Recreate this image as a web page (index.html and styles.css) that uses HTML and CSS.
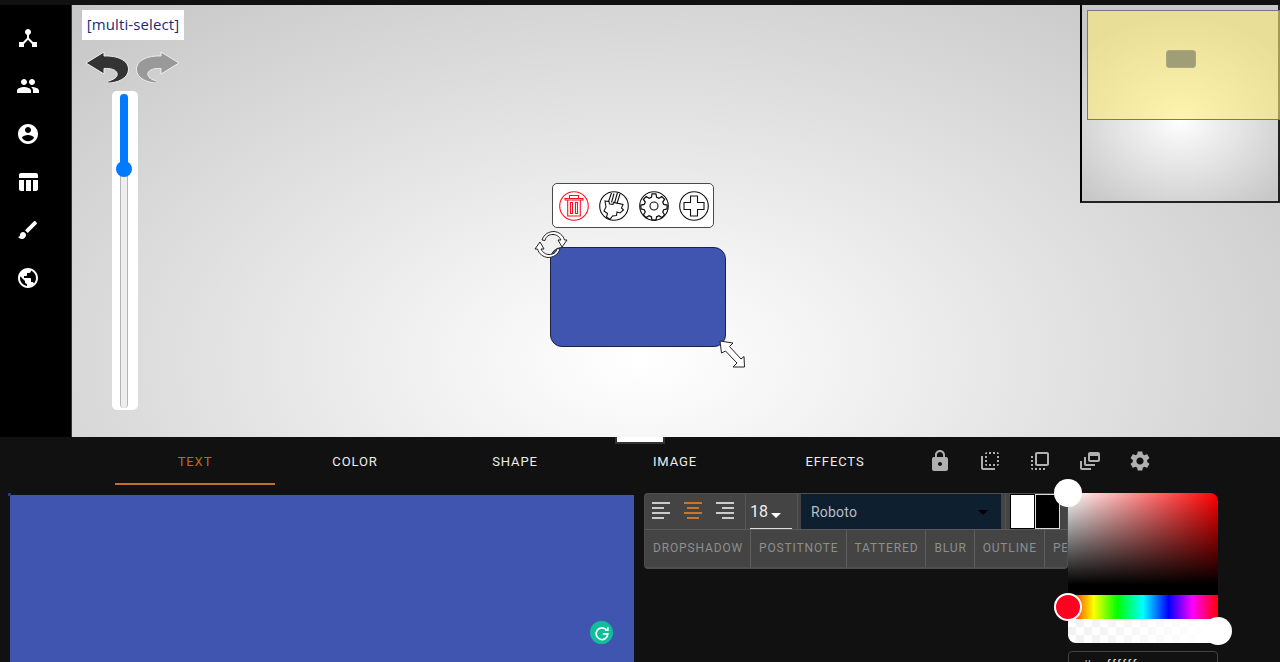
FILE: index.html
```html
<!DOCTYPE html>
<html lang="en">
<head>
<meta charset="utf-8">
<title>Editor</title>
<link rel="stylesheet" href="styles.css">
</head>
<body>
<div class="top-strip"></div>
<main class="workspace">
  <nav class="sidebar">
    <svg class="nav-icon" viewBox="0 0 24 24"><path d="M17 16l-4-4V8.820C14.150 8.400 15 7.310 15 6c0-1.660-1.340-3-3-3S9 4.340 9 6c0 1.310.85 2.400 2 2.820V12l-4 4H3v5h5v-3.050l4-4.200 4 4.200V21h5v-5h-4z"/></svg>
    <svg class="nav-icon" viewBox="0 0 24 24"><path d="M16 11c1.660 0 2.990-1.340 2.990-3S17.660 5 16 5c-1.660 0-3 1.340-3 3s1.340 3 3 3zm-8 0c1.660 0 2.990-1.340 2.990-3S9.660 5 8 5C6.340 5 5 6.340 5 8s1.340 3 3 3zm0 2c-2.330 0-7 1.170-7 3.500V19h14v-2.500c0-2.330-4.670-3.500-7-3.500zm8 0c-.29 0-.62.020-.97.050 1.160.84 1.970 1.970 1.970 3.450V19h6v-2.500c0-2.330-4.670-3.500-7-3.500z"/></svg>
    <svg class="nav-icon" viewBox="0 0 24 24"><path d="M12 2C6.480 2 2 6.480 2 12s4.480 10 10 10 10-4.480 10-10S17.520 2 12 2zm0 3c1.660 0 3 1.340 3 3s-1.340 3-3 3-3-1.340-3-3 1.340-3 3-3zm0 14.200c-2.500 0-4.710-1.280-6-3.220.03-1.990 4-3.080 6-3.080 1.990 0 5.970 1.090 6 3.080-1.290 1.940-3.500 3.220-6 3.220z"/></svg>
    <svg class="nav-icon" viewBox="0 0 24 24"><path d="M10 10.020h5V21h-5zM17 21h3c1.100 0 2-.9 2-2v-9h-5v11zm3-18H5c-1.100 0-2 .9-2 2v3h19V5c0-1.100-.9-2-2-2zM3 19c0 1.100.9 2 2 2h3V10H3v9z"/></svg>
    <svg class="nav-icon" viewBox="0 0 24 24"><path d="M7 14c-1.660 0-3 1.340-3 3 0 1.310-1.160 2-2 2 .92 1.220 2.490 2 4 2 2.210 0 4-1.790 4-4 0-1.660-1.340-3-3-3zm13.710-9.370l-1.340-1.340c-.39-.39-1.020-.39-1.410 0L9 12.250 11.750 15l8.960-8.960c.39-.39.39-1.020 0-1.410z"/></svg>
    <svg class="nav-icon" viewBox="0 0 24 24"><path d="M12 2C6.480 2 2 6.480 2 12s4.480 10 10 10 10-4.480 10-10S17.520 2 12 2zm-1 17.930c-3.950-.49-7-3.850-7-7.930 0-.62.080-1.210.21-1.790L9 15v1c0 1.100.9 2 2 2v1.930zm6.900-2.540c-.26-.81-1-1.390-1.900-1.390h-1v-3c0-.55-.45-1-1-1H8v-2h2c.55 0 1-.45 1-1V7h2c1.100 0 2-.9 2-2v-.41c2.930 1.190 5 4.060 5 7.410 0 2.080-.8 3.970-2.100 5.390z"/></svg>
  </nav>
  <section class="canvas">
    <div class="mode-label">[multi-select]</div>
    <div class="history">
      <svg class="history-icon" viewBox="0 0 46 32"><path class="undo" d="M1 12 19 1V5C32 4.500 44 9 43.500 19 43 27 33 32 23 32 22 31 23 30 25 29.500 30 28 33 25.500 32 22 31 18.500 25 17 19 17.500V23Z"/></svg>
      <svg class="history-icon" viewBox="0 0 46 32"><path class="redo" transform="matrix(-1 0 0 1 46 0)" d="M1 12 19 1V5C32 4.500 44 9 43.500 19 43 27 33 32 23 32 22 31 23 30 25 29.500 30 28 33 25.500 32 22 31 18.500 25 17 19 17.500V23Z"/></svg>
    </div>
    <div class="zoom-slider">
      <div class="zoom-track"><div class="zoom-fill"></div><div class="zoom-thumb"></div></div>
    </div>
    <div class="node-toolbar">
      <svg class="tool tool-delete" viewBox="0 0 30 30"><circle cx="15" cy="15" r="14.300"/><path d="M6 7.500h18v1.500H6zM10.500 7.500V4.500h9v3M8.700 9V25h12.600V9M11.500 11.500V22.500h2V11.500zM16.500 11.500V22.500h2V11.500z"/></svg>
      <svg class="tool" viewBox="0 0 30 30"><circle cx="15" cy="15" r="14.300"/><path d="M12.500 2 9.500 10.500M15 2.500 12.500 11.500M18.500 1.500 15.500 12M21 3 18 12.500"/><path d="M6 10 10 10.500 10.500 13 14 13.500 14.500 11.500 24 13.500 22.500 17 24.500 19 21 22 18 21 17.500 24.500 13.500 25 11 28.500 7.500 26 8.500 22.500 5 20 7 16Z"/></svg>
      <svg class="tool" viewBox="0 0 30 30"><circle cx="15" cy="15" r="14.300"/><path transform="translate(15 15) scale(1.150) translate(-15 -15)" d="M13.300 4.500h3.400l.6 2.900 2 .9 2.500-1.600 2.400 2.400-1.600 2.500.9 2 2.900.6v3.400l-2.900.6-.9 2 1.600 2.500-2.400 2.400-2.500-1.600-2 .9-.6 2.900h-3.400l-.6-2.900-2-.9-2.500 1.600-2.400-2.400 1.600-2.500-.9-2-2.900-.6v-3.400l2.900-.6.9-2-1.600-2.500 2.400-2.400 2.500 1.600 2-.9z"/><circle cx="15" cy="15" r="4"/></svg>
      <svg class="tool" viewBox="0 0 30 30"><circle cx="15" cy="15" r="14.300"/><path d="M11.500 5h7v6.500H25v7h-6.500V25h-7v-6.500H5v-7h6.500z"/></svg>
    </div>
    <div class="node"></div>
    <svg class="handle-rotate" viewBox="0 0 32 27"><path d="M7 9C9 3 14 .5 19 .5 24 1 28 4 29.500 9L32 9 27 16 23 9 26 9C24 5 21 3.500 18 3.500 14 3.500 11 5 10 9.500Z"/><path transform="rotate(180 16 13.500)" d="M7 9C9 3 14 .5 19 .5 24 1 28 4 29.500 9L32 9 27 16 23 9 26 9C24 5 21 3.500 18 3.500 14 3.500 11 5 10 9.500Z"/></svg>
    <svg class="handle-resize" viewBox="0 0 26 28"><path d="M1 1 14 3 10.500 6.500 22 19 25 16.500 25.500 27 14 27 18 23 6.500 11 2.500 13Z"/></svg>
    <aside class="minimap">
      <div class="minimap-view"><div class="minimap-node"></div></div>
    </aside>
  </section>
</main>
<section class="panel">
  <div class="drawer-handle"></div>
  <header class="tab-row">
    <div class="tabs">
      <button class="tab tab-active">TEXT</button>
      <button class="tab">COLOR</button>
      <button class="tab">SHAPE</button>
      <button class="tab">IMAGE</button>
      <button class="tab">EFFECTS</button>
    </div>
    <div class="tab-icons">
      <svg class="tab-icon" viewBox="0 0 24 24"><path d="M18 8h-1V6c0-2.760-2.240-5-5-5S7 3.240 7 6v2H6c-1.100 0-2 .9-2 2v10c0 1.100.9 2 2 2h12c1.100 0 2-.9 2-2V10c0-1.100-.9-2-2-2zm-6 9c-1.100 0-2-.9-2-2s.9-2 2-2 2 .9 2 2-.9 2-2 2zm3.100-9H8.900V6c0-1.710 1.390-3.100 3.100-3.100 1.710 0 3.100 1.390 3.100 3.100v2z"/></svg>
      <svg class="tab-icon" viewBox="0 0 24 24"><path d="M9 7H7v2h2V7zm0 4H7v2h2v-2zm0-8c-1.110 0-2 .9-2 2h2V3zm4 12h-2v2h2v-2zm6-12v2h2c0-1.100-.9-2-2-2zm-6 0h-2v2h2V3zM9 17v-2H7c0 1.100.89 2 2 2zm10-4h2v-2h-2v2zm0-4h2V7h-2v2zm0 8c1.100 0 2-.9 2-2h-2v2zM5 7H3v12c0 1.100.89 2 2 2h12v-2H5V7zm10-2h2V3h-2v2zm0 12h2v-2h-2v2z"/></svg>
      <svg class="tab-icon" viewBox="0 0 24 24"><path d="M3 13h2v-2H3v2zm0 4h2v-2H3v2zm2 4v-2H3c0 1.100.89 2 2 2zM3 9h2V7H3v2zm12 12h2v-2h-2v2zm4-18H9c-1.110 0-2 .9-2 2v10c0 1.100.89 2 2 2h10c1.100 0 2-.9 2-2V5c0-1.100-.9-2-2-2zm0 12H9V5h10v10zm-8 6h2v-2h-2v2zm-4 0h2v-2H7v2z"/></svg>
      <svg class="tab-icon" viewBox="0 0 24 24"><path d="M8 8H6v7c0 1.100.9 2 2 2h9v-2H8V8zM20 3h-8c-1.100 0-2 .9-2 2v6c0 1.100.9 2 2 2h8c1.100 0 2-.9 2-2V5c0-1.100-.9-2-2-2zm0 8h-8V7h8v4zM4 12H2v7c0 1.100.9 2 2 2h9v-2H4v-7z"/></svg>
      <svg class="tab-icon" viewBox="0 0 24 24"><path d="M19.140 12.940c.04-.3.060-.61.060-.94 0-.32-.02-.64-.07-.94l2.030-1.580c.18-.14.23-.41.120-.61l-1.920-3.320c-.12-.22-.37-.29-.59-.22l-2.390.96c-.5-.38-1.030-.7-1.620-.94l-.36-2.540c-.04-.24-.24-.41-.48-.41h-3.840c-.24 0-.43.170-.47.410l-.36 2.540c-.59.240-1.130.57-1.620.94l-2.390-.96c-.22-.08-.47 0-.59.22L2.740 8.870c-.12.21-.08.47.120.61l2.030 1.580c-.05.300-.09.630-.09.940s.02.640.07.940l-2.030 1.580c-.18.140-.23.410-.12.610l1.920 3.320c.12.220.37.290.59.220l2.390-.96c.5.380 1.030.7 1.620.94l.36 2.540c.05.240.24.410.48.410h3.840c.24 0 .44-.170.47-.410l.36-2.540c.59-.240 1.130-.56 1.620-.94l2.390.96c.22.080.47 0 .59-.22l1.920-3.320c.12-.22.070-.47-.12-.61l-2.010-1.580zM12 15.600c-1.980 0-3.600-1.620-3.600-3.600s1.620-3.600 3.600-3.600 3.600 1.620 3.600 3.600-1.620 3.600-3.600 3.600z"/></svg>
    </div>
  </header>
  <div class="panel-body">
    <div class="editor">
      <span class="grammar-badge"><svg viewBox="0 0 24 24"><path d="M17.500 8.500A7 7 0 1 0 19 13h-6"/><path d="M15.500 8.500h3.500V5"/></svg></span>
    </div>
    <div class="props">
      <div class="props-row">
        <div class="align-group">
          <span class="align align-left"><i></i><i></i><i></i><i></i></span>
          <span class="align align-center active"><i></i><i></i><i></i><i></i></span>
          <span class="align align-right"><i></i><i></i><i></i><i></i></span>
        </div>
        <div class="size-select"><span>18</span><b class="caret-white"></b></div>
        <div class="font-select"><span>Roboto</span><b class="caret-dark"></b></div>
        <div class="swatches"><span class="swatch swatch-white"></span><span class="swatch swatch-black"></span></div>
      </div>
      <div class="effects-row">
        <span class="effect">DROPSHADOW</span>
        <span class="effect">POSTITNOTE</span>
        <span class="effect">TATTERED</span>
        <span class="effect">BLUR</span>
        <span class="effect">OUTLINE</span>
        <span class="effect">PENCIL</span>
      </div>
    </div>
    <div class="picker">
      <div class="picker-sat"><div class="picker-knob knob-sat"></div></div>
      <div class="picker-hue"><div class="picker-knob knob-hue"></div></div>
      <div class="picker-alpha"><div class="picker-knob knob-alpha"></div></div>
      <div class="picker-hex"><span>#</span><span class="hex-value">ffffff</span></div>
    </div>
  </div>
</section>
</body>
</html>
```
FILE: styles.css
```css
* { box-sizing: border-box; }
html, body { margin: 0; height: 662px; overflow: hidden; background: #111; }
body { font-family: Roboto, sans-serif; display: flex; flex-direction: column; }
.top-strip { height: 5px; flex: none; background: #111; }
.workspace { height: 432px; flex: none; display: flex; }
.sidebar { width: 72px; flex: none; background: #000; border-right: 1px solid #333; display: flex; flex-direction: column; align-items: flex-start; gap: 24px; padding: 21px 0 0 16px; }
.nav-icon { width: 24px; height: 24px; fill: #fff; }
.canvas { flex: 1; position: relative; overflow: hidden; background: radial-gradient(ellipse 820px 480px at 568px 355px, #fff 0%, #f2f2f2 25%, #c6c6c6 100%); }
.mode-label { position: absolute; left: 10px; top: 5px; height: 30px; width: 102px; background: #fff; color: #1c2a78; font: 15px/29px "Open Sans", sans-serif; letter-spacing: .1px; text-align: center; white-space: nowrap; }
.history { position: absolute; left: 13px; top: 46px; display: flex; gap: 3px; }
.history-icon { width: 46px; height: 32px; display: block; }
.undo { fill: #333; stroke: #eee; stroke-width: 1; }
.redo { fill: #999; stroke: #eee; stroke-width: 1; }
.zoom-slider { position: absolute; left: 40px; top: 86px; width: 26px; height: 319px; background: #fff; border-radius: 5px; padding: 3px 2px 2px 0; display: flex; justify-content: center; }
.zoom-track { position: relative; width: 8px; background: #eee; border-left: 1px solid #b5b5b5; border-right: 1px solid #b5b5b5; border-radius: 4px; }
.zoom-fill { position: absolute; left: -1px; right: -1px; top: 0; height: 75px; background: #007bff; border-radius: 4px 4px 0 0; }
.zoom-thumb { position: absolute; left: 50%; top: 67px; width: 16px; height: 16px; margin-left: -8px; border-radius: 50%; background: #007bff; }
.node-toolbar { position: absolute; left: 480px; top: 178px; width: 162px; height: 45px; background: #fff; border: 1.500px solid #4a4a4a; border-radius: 5px; display: flex; align-items: center; justify-content: center; gap: 10px; padding-left: 1px; }
.tool { width: 30px; height: 30px; fill: none; stroke: #111; stroke-width: 1.100; }
.tool-delete { stroke: #ff1020; }
.node { position: absolute; left: 478px; top: 242px; width: 176px; height: 100px; background: #3f55b0; border: 1px solid #1c2145; border-radius: 12px; }
.handle-rotate { position: absolute; left: 463px; top: 226px; width: 32px; height: 27px; fill: #fff; stroke: #222; stroke-width: 1; overflow: visible; }
.handle-resize { position: absolute; left: 647px; top: 335px; width: 26px; height: 28px; fill: #fff; stroke: #222; stroke-width: 1; }
.minimap { position: absolute; right: 0; top: 0; width: 200px; height: 198px; border: 2px solid #222; border-top: 0; border-left-color: #000; padding: 5px 0 0 5px; background: radial-gradient(ellipse 130px 105px at 98px 115px, #fff 0%, #f0f0f0 25%, #c8c8c8 100%); }
.minimap-view { width: 193px; height: 110px; margin-right: -2px; background: rgba(255, 236, 120, .6); border: 1px solid #777; border-right: 0; display: flex; justify-content: center; padding: 39px 6px 0 0; }
.minimap-node { width: 30px; height: 18px; background: #a09e76; border-radius: 3px; border: 1px solid #aaa880; }
.panel { flex: 1; position: relative; background: #111; color: #fff; }
.drawer-handle { position: absolute; left: 615px; top: 0; width: 50px; height: 7px; background: #fff; border: 2px solid #333; border-top: 0; }
.tab-row { height: 48px; display: flex; align-items: center; padding-left: 115px; }
.tabs { display: flex; }
.tab { width: 160px; height: 48px; background: none; border: 0; border-bottom: 2px solid transparent; padding: 3px 0 0; color: #eee; font: 400 13px/16px Roboto, sans-serif; letter-spacing: .9px; }
.tab-active { color: #b96a26; border-bottom-color: #c1702c; }
.tab-icons { display: flex; gap: 26px; margin-left: 13px; }
.tab-icon { width: 24px; height: 24px; fill: #b0b0b0; display: block; }
.panel-body { position: relative; height: 177px; padding: 10px 0 0 10px; display: flex; align-items: flex-start; }
.editor { position: relative; width: 624px; height: 167px; background: #3f55b0; flex: none; }
.editor::before { content: ""; position: absolute; left: -2px; top: -2px; width: 3px; height: 3px; background: #2b3a7c; }
.grammar-badge { position: absolute; left: 580px; top: 126px; width: 23px; height: 23px; border-radius: 50%; background: #10bf9a; display: flex; align-items: center; justify-content: center; }
.grammar-badge svg { width: 20px; height: 20px; flex: none; fill: none; stroke: #fff; stroke-width: 2; }
.props { width: 424px; margin: -2px 0 0 10px; flex: none; height: 76px; background: #444; border: 1px solid #4e4e4e; border-bottom-width: 2px; border-radius: 4px; overflow: hidden; }
.props-row { height: 36px; display: flex; border-bottom: 1px solid #5a5a5a; }
.align-group { width: 101px; display: flex; align-items: center; gap: 14px; padding-left: 7px; border-right: 1px solid #555; padding-bottom: 3px; }
.align { width: 18px; display: flex; flex-direction: column; gap: 3px; }
.align i { display: block; height: 2px; width: 18px; background: #ccc; }
.align-left i:nth-child(even) { width: 12px; }
.align-right { align-items: flex-end; }
.align-right i:nth-child(even) { width: 12px; }
.align-center { align-items: center; }
.align-center i:nth-child(even) { width: 12px; }
.align-center i { background: #c9752e; }
.size-select { width: 52px; padding: 0 5px 0 4px; border-right: 1px solid #555; position: relative; display: flex; align-items: center; gap: 3px; font-size: 16px; color: #eee; flex: none; }
.size-select::after { content: ""; position: absolute; left: 4px; right: 5px; bottom: 0; height: 1px; background: #ddd; }
.caret-white { width: 0; height: 0; border: 5px solid transparent; border-top-color: #fff; border-bottom: 0; margin-top: 7px; }
.font-select { width: 200px; flex: none; margin-left: 3px; background: #0e1f30; display: flex; align-items: center; justify-content: space-between; padding: 1px 13px 0 10px; font-size: 14px; color: #b8bec6; letter-spacing: .2px; }
.caret-dark { width: 0; height: 0; border: 5px solid transparent; border-top-color: #000; border-bottom: 0; }
.swatches { margin-left: 4px; border-left: 1px solid #555; padding-left: 4px; display: flex; }
.swatch { width: 25px; height: 35px; display: block; }
.swatch-white { background: #fff; border: 1px solid #000; }
.swatch-black { background: #000; border: 1px solid #ddd; }
.effects-row { display: flex; height: 38px; white-space: nowrap; }
.effect { height: 38px; padding: 0 7px 0 8px; font: 12px/36px Roboto, sans-serif; letter-spacing: .85px; color: #8e8e8e; border-right: 1px solid #5e5e5e; }
.picker { position: absolute; left: 1068px; top: 8px; width: 150px; }
.picker-sat { position: relative; height: 102px; border-radius: 8px 8px 0 0; background: linear-gradient(to top, #000 10%, transparent 100%), linear-gradient(to right, #fff, #f00); }
.picker-hue { position: relative; height: 24px; background: linear-gradient(to right, #f00 0%, #ff0 17%, #0f0 33%, #0ff 50%, #00f 67%, #f0f 83%, #f00 100%); }
.picker-alpha { position: relative; height: 24px; border-radius: 0 0 8px 8px; background-color: #fff; background-image: linear-gradient(to right, rgba(255,255,255,.2), #fff), conic-gradient(#eee 25%, #fff 0 50%, #eee 0 75%, #fff 0); background-size: 100% 100%, 16px 16px; }
.picker-knob { position: absolute; width: 28px; height: 28px; border-radius: 50%; background: #fff; }
.knob-sat { left: -14px; top: -14px; }
.knob-hue { left: -14px; top: -2px; background: #ff0020; border: 2px solid #fff; }
.knob-alpha { right: -14px; top: -2px; }
.picker-hex { margin-top: 8px; height: 30px; border: 1px solid #444; border-radius: 4px; padding: 0 14px; display: flex; gap: 16px; color: #ddd; font: 14px/26px "Liberation Sans", sans-serif; }
.hex-value { letter-spacing: 1.500px; }
```
